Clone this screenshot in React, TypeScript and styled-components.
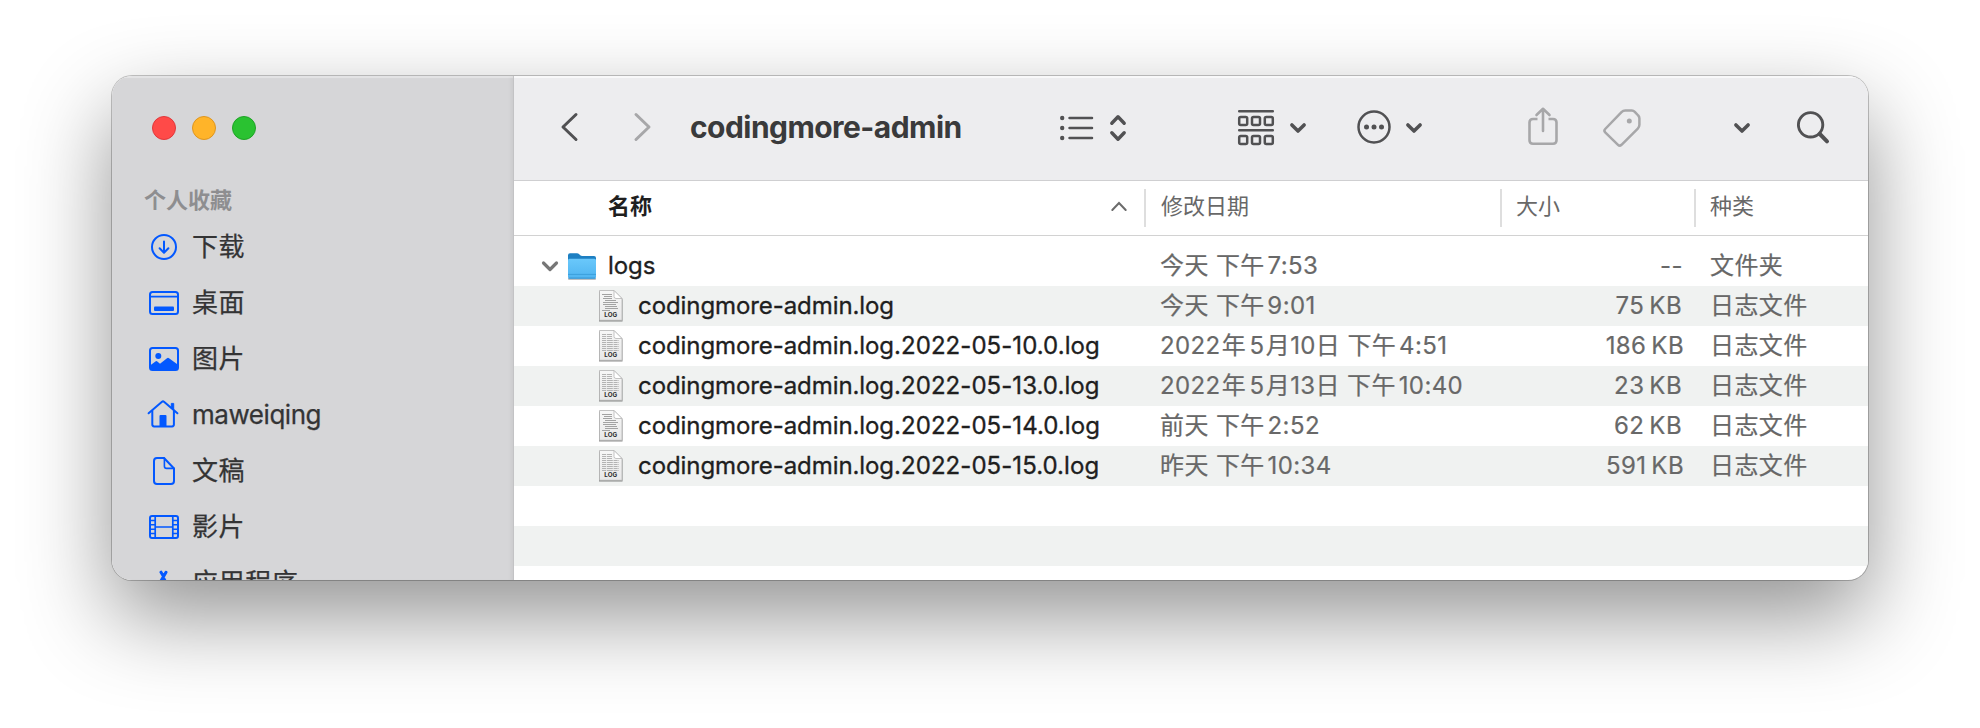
import React from 'react';
import styled, { createGlobalStyle } from 'styled-components';

const GlobalStyle = createGlobalStyle`
  * { box-sizing: border-box; }
  html, body { margin: 0; background: #fff; }
  body {
    font-family: Inter, "Noto Sans CJK SC", sans-serif;
    color: #1f1f1f;
    overflow: hidden;
  }
  svg { display: block; flex: none; overflow: visible; }
`;

const Desktop = styled.div`
  width: 1980px;
  height: 728px;
  padding: 76px 112px 148px;
  background: #fff;
  overflow: hidden;
`;

const Window = styled.div`
  display: flex;
  width: 1756px;
  height: 504px;
  border-radius: 20px;
  overflow: hidden;
  background: #fff;
  box-shadow: 0 0 0 1px rgba(0, 0, 0, 0.22), 0 36px 88px rgba(0, 0, 0, 0.43);
`;

const Sidebar = styled.aside`
  width: 402px;
  flex: none;
  height: 504px;
  overflow: hidden;
  background: #d6d6d8;
  border-right: 1px solid #c3c3c5;
  box-shadow: inset 0 2px 1px rgba(255, 255, 255, 0.35), inset -4px 0 4px -3px rgba(0, 0, 0, 0.08);
`;

const Lights = styled.div`
  display: flex;
  gap: 16px;
  padding: 40px 0 0 40px;
`;

const Light = styled.span<{ $fill: string; $edge: string }>`
  width: 24px;
  height: 24px;
  border-radius: 50%;
  background: ${p => p.$fill};
  border: 1px solid ${p => p.$edge};
`;

const SectionTitle = styled.div`
  margin: 46px 0 0 32px;
  height: 28px;
  line-height: 28px;
  font-size: 22px;
  font-weight: 700;
  color: #8e8e90;
`;

const NavList = styled.nav`
  margin-top: 5px;
`;

const NavItem = styled.div`
  display: flex;
  align-items: center;
  height: 56px;
  padding-left: 36px;
  color: #343435;
`;

const NavIcon = styled.span`
  display: flex;
  justify-content: center;
  width: 32px;
  margin-right: 12px;
  color: #0358ff;
`;

const NavLabel = styled.span<{ $spacing: number }>`
  font-size: 26px;
  line-height: 40px;
  letter-spacing: ${p => p.$spacing}px;
  white-space: nowrap;
  -webkit-text-stroke: 0.25px currentColor;
`;

const Main = styled.main`
  flex: none;
  width: 1354px;
  display: flex;
  flex-direction: column;
`;

const Toolbar = styled.header`
  display: flex;
  align-items: center;
  flex: none;
  height: 105px;
  padding: 0 0 2px 47px;
  background: #ededef;
  border-bottom: 1px solid #cfcfd1;
  box-shadow: inset 0 2px 0 rgba(255, 255, 255, 0.6);
`;

const Tool = styled.span<{ $before?: number; $drop?: number; $dim?: boolean }>`
  display: flex;
  margin-left: ${p => p.$before ?? 0}px;
  margin-top: ${p => (p.$drop ?? 0) * 2}px;
  color: ${p => (p.$dim ? '#a7a7a9' : '#515153')};
`;

const Title = styled.h1`
  width: 330px;
  margin: 0 0 0 39px;
  font-size: 30px;
  line-height: 40px;
  font-weight: 700;
  letter-spacing: -0.55px;
  color: #3a3a3b;
  white-space: nowrap;
`;

const Columns = styled.div`
  display: grid;
  grid-template-columns: 630px 356px 194px 174px;
  align-items: center;
  flex: none;
  height: 55px;
  border-bottom: 1px solid #d2d2d2;
  font-size: 22px;
`;

const Column = styled.div<{ $active?: boolean; $inset?: number }>`
  display: flex;
  align-items: center;
  justify-content: space-between;
  height: 38px;
  line-height: 34px;
  padding: ${p => (p.$active ? '0 17px 4px 94px' : `0 0 4px ${p.$inset ?? 14}px`)};
  border-left: ${p => (p.$active ? 'none' : '2px solid #dedede')};
  font-weight: ${p => (p.$active ? 700 : 400)};
  color: ${p => (p.$active ? '#1f1f1f' : '#686868')};
`;

const Rows = styled.div`
  padding-top: 10px;
`;

const Row = styled.div<{ $striped: boolean }>`
  display: grid;
  grid-template-columns: 630px 356px 194px 174px;
  align-items: center;
  height: 40px;
  font-size: 24px;
  line-height: 40px;
  white-space: nowrap;
  background: ${p => (p.$striped ? '#f0f2f1' : '#fff')};
`;

const NameCell = styled.div<{ $nested: boolean }>`
  display: flex;
  align-items: center;
  height: 40px;
  padding-left: ${p => (p.$nested ? 84 : 27)}px;
`;

const FileName = styled.span<{ $left: number }>`
  margin-left: ${p => p.$left}px;
  letter-spacing: -0.08px;
  color: #1f1f1f;
  -webkit-text-stroke: 0.35px currentColor;
`;

const Suffix = styled.span`
  letter-spacing: 0.06px;
`;

const Cell = styled.div<{ $end?: number }>`
  padding: ${p => (p.$end !== undefined ? `0 ${p.$end}px 0 0` : '0 0 0 16px')};
  text-align: ${p => (p.$end !== undefined ? 'right' : 'left')};
  letter-spacing: 0.4px;
  color: #686868;
  -webkit-text-stroke: 0.2px currentColor;
`;

const Piece = styled.span<{ $before: number }>`
  margin-left: ${p => p.$before}px;
`;

const stroke = (w: number) => ({
  fill: 'none',
  stroke: 'currentColor',
  strokeWidth: w,
  strokeLinecap: 'round' as const,
  strokeLinejoin: 'round' as const,
});

const DownloadIcon = () => (
  <svg width="26" height="26" viewBox="0 0 26 26" {...stroke(2)}>
    <circle cx="13" cy="13" r="12" />
    <path d="M13 7.5v10.7M8.6 14.3l4.4 4.4 4.4-4.4" />
  </svg>
);

const DesktopIcon = () => (
  <svg width="30" height="24" viewBox="0 0 30 24" {...stroke(2)}>
    <rect x="1" y="1" width="28" height="22" rx="2.5" />
    <path d="M1 5.6h28" strokeWidth="1.6" />
    <rect x="5" y="15.5" width="20" height="4.5" rx="1" fill="currentColor" stroke="none" />
  </svg>
);

const PictureIcon = () => (
  <svg width="30" height="24" viewBox="0 0 30 24" {...stroke(2)}>
    <rect x="1" y="1" width="28" height="22" rx="2.5" />
    <circle cx="9.3" cy="9" r="3" fill="currentColor" stroke="none" />
    <path d="M1 18.5l5.8-4.2q.8-.5 1.500.1l2.700 2.400 7-5.600q1-.7 2 0L29 17.800V21q0 2-2 2H3q-2 0-2-2z" fill="currentColor" stroke="none" />
  </svg>
);

const HomeIcon = () => (
  <svg width="32" height="31" viewBox="1 0 32 31" {...stroke(2)}>
    <path d="M1.600 13.300L15 1.800q1-.8 2 0l13.400 11.500" />
    <path d="M5.300 10.800V24.600q0 1.800 1.800 1.800h18q1.800 0 1.800-1.800V10.800" />
    <path d="M24.300 3.800v4l2.400 2V3.800z" fill="currentColor" strokeWidth="1" />
    <path d="M12.500 26.500V16q0-1 1-1h5q1 0 1 1v10.500z" fill="currentColor" stroke="none" />
  </svg>
);

const DocumentIcon = () => (
  <svg width="22" height="28" viewBox="0 0 22 28" {...stroke(2)}>
    <path d="M11 1H4Q1 1 1 4v20q0 3 3 3h14q3 0 3-3V11.500z" />
    <path d="M11.400 1v8.200q0 2.200 2.200 2.200H21" strokeWidth="1.600" />
  </svg>
);

const FilmIcon = () => (
  <svg width="30" height="24" viewBox="0 0 30 24" {...stroke(2)}>
    <rect x="1" y="1" width="28" height="22" rx="2" />
    <path d="M6.200 1v22M23.800 1v22M6.200 12h17.600" strokeWidth="1.700" />
    <path d="M1 5.500h5M1 9.800h5M1 14.200h5M1 18.500h5M24 5.500h5M24 9.800h5M24 14.200h5M24 18.500h5" strokeWidth="1.500" />
  </svg>
);

const AppsIcon = () => (
  <svg width="30" height="26" viewBox="0 0 30 26" {...stroke(3)}>
    <path d="M12 2.200l1.800 3M17 2.200L8.500 17M14.800 8.500L21 20M2 17h14M22 17h6M6 22l-1 2" />
  </svg>
);

const BackIcon = () => (
  <svg width="17" height="28" viewBox="0 0 17 28" {...stroke(3)}>
    <path d="M15 1.500L2 14l13 12.500" />
  </svg>
);

const ForwardIcon = () => (
  <svg width="17" height="28" viewBox="0 0 17 28" {...stroke(3)}>
    <path d="M2 1.500L15 14 2 26.500" />
  </svg>
);

const ListIcon = () => (
  <svg width="34" height="26" viewBox="0 0 34 26" {...stroke(2.500)}>
    <path d="M9.500 3h22.500M9.500 13h22.500M9.500 23h22.500" />
    <g fill="currentColor" stroke="none">
      <circle cx="2.200" cy="3" r="2.200" />
      <circle cx="2.200" cy="13" r="2.200" />
      <circle cx="2.200" cy="23" r="2.200" />
    </g>
  </svg>
);

const UpDownIcon = () => (
  <svg width="16" height="26" viewBox="0 0 16 26" {...stroke(3.400)}>
    <path d="M1.800 8.200L8 1.800l6.200 6.400M1.800 17.800L8 24.200l6.200-6.400" />
  </svg>
);

const GroupIcon = () => (
  <svg width="36" height="35" viewBox="0 0 36 35" {...stroke(2.500)}>
    <path d="M1.200 1.300h33.600M1.200 20.300h33.600" />
    {[7, 26].map(y =>
      [1.200, 14, 26.800].map(x => <rect key={`${x}-${y}`} x={x} y={y} width="8" height="8" rx="1.500" />)
    )}
  </svg>
);

const ChevronDown = () => (
  <svg width="16" height="10" viewBox="0 0 16 10" {...stroke(3.600)}>
    <path d="M1.900 2L8 8 14.100 2" />
  </svg>
);

const MoreIcon = () => (
  <svg width="34" height="34" viewBox="0 0 34 34" {...stroke(2.500)}>
    <circle cx="17" cy="17" r="15.500" />
    <g fill="currentColor" stroke="none">
      <circle cx="9.500" cy="17" r="2.500" />
      <circle cx="17" cy="17" r="2.500" />
      <circle cx="24.500" cy="17" r="2.500" />
    </g>
  </svg>
);

const ShareIcon = () => (
  <svg width="30" height="38" viewBox="0 0 30 38" {...stroke(2.600)}>
    <path d="M9.500 12H5q-3.500 0-3.500 3.500v17.700q0 3.500 3.500 3.500h20q3.500 0 3.500-3.500V15.500q0-3.500-3.500-3.500h-4.500" strokeLinecap="butt" />
    <path d="M15 24V2.200M8.500 8L15 1.800 21.500 8" />
  </svg>
);

const TagIcon = () => (
  <svg width="38" height="38" viewBox="0 0 38 38" {...stroke(2.500)}>
    <path d="M2.200 20L18.500 3.200q1.600-1.600 3.800-1.600h6.500q1.800 0 3 1.200L35.200 6.500q1.200 1.200 1.200 3v6.300q0 2.200-1.600 3.800L18.500 35.800q-1.800 1.600-3.500 0L2.200 23.300q-1.600-1.600 0-3.300z" />
    <circle cx="26.300" cy="12" r="2.500" fill="currentColor" stroke="none" />
  </svg>
);

const SearchIcon = () => (
  <svg width="32" height="33" viewBox="0 0 32 33" {...stroke(2.900)}>
    <circle cx="13.600" cy="13.800" r="12.200" />
    <path d="M22.800 23l7.200 7.300" strokeWidth="4" />
  </svg>
);

const SortIcon = () => (
  <svg width="16" height="10" viewBox="0 0 16 10" fill="none" stroke="#6c6c6c" strokeWidth="2" strokeLinecap="round">
    <path d="M1.300 9L8 2l6.700 7" />
  </svg>
);

const DisclosureIcon = () => (
  <svg width="18" height="12" viewBox="0 0 18 12" fill="none" stroke="#777" strokeWidth="3.200" strokeLinecap="round" strokeLinejoin="round">
    <path d="M2.500 3L9 9.500 15.500 3" />
  </svg>
);

const FolderIcon = () => (
  <svg width="30" height="30" viewBox="0 -0.700 30 30">
    <defs>
      <linearGradient id="folderFront" x1="0" y1="0" x2="0" y2="1">
        <stop offset="0" stopColor="#6ac8fb" />
        <stop offset="1" stopColor="#4fb4f0" />
      </linearGradient>
    </defs>
    <rect x="1" y="26" width="28" height="2.300" rx="1" fill="#000" opacity="0.25" />
    <path d="M1 3.500Q1 1.500 3 1.500h7q1.200 0 2 .8l1.200 1.200q.8.700 2 .7H27q2 0 2 2V25H1z" fill="#1d7fc2" />
    <path d="M1 8.500Q1 7 2.500 7h25Q29 7 29 8.500V25q0 2-2 2H3q-2 0-2-2z" fill="url(#folderFront)" />
    <path d="M1 22.700h28" stroke="#3c9fdc" strokeWidth="1" />
    <path d="M1.500 26.400h27" stroke="#3592d0" strokeWidth="1" />
  </svg>
);

const LogIcon = ({ dense }: { dense: boolean }) => (
  <svg width="26" height="34" viewBox="0 0 26 34">
    <defs>
      <linearGradient id="logPaper" x1="0" y1="0" x2="0" y2="1">
        <stop offset="0" stopColor="#f7f7f7" />
        <stop offset="1" stopColor="#e8e8e8" />
      </linearGradient>
    </defs>
    <path d="M1 2H16l8.500 8v22H1z" fill="#000" opacity="0.45" transform="translate(0 .5)" />
    <path d="M1.500 1.500H16L24 9.500v21.800H1.500z" fill="url(#logPaper)" stroke="#b4b4b4" strokeWidth="0.800" />
    {dense ? (
      <path d="M4 5.500h10M4 7.500h10M4 9.500h10M4 11.500h17M4 13.500h17M4 15.500h17M4 17.500h17M4 19.500h17M4 21.500h17" stroke="#b3b3b3" strokeWidth="1.200" strokeDasharray="4 .8 6 .8" />
    ) : (
      <path d="M4 5.500h10M6 7.500h8M5 9.500h9M7 11.500h11M5 13.500h15M5 15.500h13M7 17.500h12M7 19.500h13M4 21.500h8" stroke="#a2a2a2" strokeWidth="1.200" />
    )}
    <path d="M16 1.500v6q0 2 2 2h6z" fill="#fff" stroke="#b5b5b5" strokeWidth="0.800" />
    <text x="12.800" y="27.900" textAnchor="middle" fontFamily="Inter, sans-serif" fontSize="6.200" fontWeight="700" letterSpacing="0.100" fill="#2a2a2a">LOG</text>
  </svg>
);

const places = [
  { label: '下载', icon: <DownloadIcon />, spacing: 0.6 },
  { label: '桌面', icon: <DesktopIcon />, spacing: 0.6 },
  { label: '图片', icon: <PictureIcon />, spacing: 0.6 },
  { label: 'maweiqing', icon: <HomeIcon />, spacing: -0.45 },
  { label: '文稿', icon: <DocumentIcon />, spacing: 0.6 },
  { label: '影片', icon: <FilmIcon />, spacing: 0.6 },
  { label: '应用程序', icon: <AppsIcon />, spacing: 0.6 },
];

/* A run of text and the thin space in front of it, in pixels. */
type Run = [text: string, before: number];
type Entry = {
  name: string;
  suffix?: string;
  date: Run[];
  size: Run[];
  end: number;
  kind: string;
  folder?: boolean;
  dense?: boolean;
};

const entries: Entry[] = [
  { name: 'logs', date: [['今天 下午', 0], ['7:53', 2.8]], size: [['--', 0]], end: 11, kind: '文件夹', folder: true },
  { name: 'codingmore-admin.log', date: [['今天 下午', 0], ['9:01', 2.6]], size: [['75', 0], ['KB', 5]], end: 12, kind: '日志文件' },
  {
    name: 'codingmore-admin.log', suffix: '.2022-05-10.0.log',
    date: [['2022', 0], ['年', 1.2], ['5', 3.3], ['月10', 1.2], ['日 下午', 0], ['4:51', 2.8]],
    size: [['186', 0], ['KB', 5]], end: 10, kind: '日志文件', dense: true,
  },
  {
    name: 'codingmore-admin.log', suffix: '.2022-05-13.0.log',
    date: [['2022', 0], ['年', 1.2], ['5', 3.3], ['月13', 1.2], ['日 下午', 0], ['10:40', 2.8]],
    size: [['23', 0], ['KB', 5]], end: 12, kind: '日志文件', dense: true,
  },
  {
    name: 'codingmore-admin.log', suffix: '.2022-05-14.0.log',
    date: [['前天 下午', 0], ['2:52', 2.8]], size: [['62', 0], ['KB', 5]], end: 12, kind: '日志文件',
  },
  {
    name: 'codingmore-admin.log', suffix: '.2022-05-15.0.log',
    date: [['昨天 下午', 0], ['10:34', 2.8]], size: [['591', 0], ['KB', 5]], end: 10, kind: '日志文件', dense: true,
  },
];

const Runs = ({ runs }: { runs: Run[] }) => (
  <>
    {runs.map(([text, before], i) => (
      <Piece key={i} $before={before}>{text}</Piece>
    ))}
  </>
);

export default function App() {
  return (
    <>
      <GlobalStyle />
      <Desktop>
        <Window>
          <Sidebar>
            <Lights>
              <Light $fill="#ff4a48" $edge="#e0383b" />
              <Light $fill="#ffb429" $edge="#de951f" />
              <Light $fill="#2ac231" $edge="#1fa326" />
            </Lights>
            <SectionTitle>个人收藏</SectionTitle>
            <NavList>
              {places.map(place => (
                <NavItem key={place.label}>
                  <NavIcon>{place.icon}</NavIcon>
                  <NavLabel $spacing={place.spacing}>{place.label}</NavLabel>
                </NavItem>
              ))}
            </NavList>
          </Sidebar>
          <Main>
            <Toolbar>
              <Tool><BackIcon /></Tool>
              <Tool $before={56} $dim><ForwardIcon /></Tool>
              <Title>codingmore-admin</Title>
              <Tool $before={40} $drop={1}><ListIcon /></Tool>
              <Tool $before={16} $drop={1}><UpDownIcon /></Tool>
              <Tool $before={112}><GroupIcon /></Tool>
              <Tool $before={16} $drop={1}><ChevronDown /></Tool>
              <Tool $before={51}><MoreIcon /></Tool>
              <Tool $before={15} $drop={1}><ChevronDown /></Tool>
              <Tool $before={106} $drop={-1}><Tool $dim><ShareIcon /></Tool></Tool>
              <Tool $before={45} $drop={1} $dim><TagIcon /></Tool>
              <Tool $before={93} $drop={1}><ChevronDown /></Tool>
              <Tool $before={47}><SearchIcon /></Tool>
            </Toolbar>
            <Columns>
              <Column $active>
                名称
                <SortIcon />
              </Column>
              <Column $inset={15}>修改日期</Column>
              <Column>大小</Column>
              <Column>种类</Column>
            </Columns>
            <Rows>
              {entries.map((entry, i) => (
                <Row key={i} $striped={i % 2 === 1}>
                  <NameCell $nested={!entry.folder}>
                    {entry.folder ? <DisclosureIcon /> : <LogIcon dense={!!entry.dense} />}
                    {entry.folder && <Tool $before={8}><FolderIcon /></Tool>}
                    <FileName $left={entry.folder ? 11 : 14}>
                      {entry.name}
                      {entry.suffix && <Suffix>{entry.suffix}</Suffix>}
                    </FileName>
                  </NameCell>
                  <Cell><Runs runs={entry.date} /></Cell>
                  <Cell $end={entry.end}><Runs runs={entry.size} /></Cell>
                  <Cell>{entry.kind}</Cell>
                </Row>
              ))}
              <Row $striped={false} />
              <Row $striped />
            </Rows>
          </Main>
        </Window>
      </Desktop>
    </>
  );
}
